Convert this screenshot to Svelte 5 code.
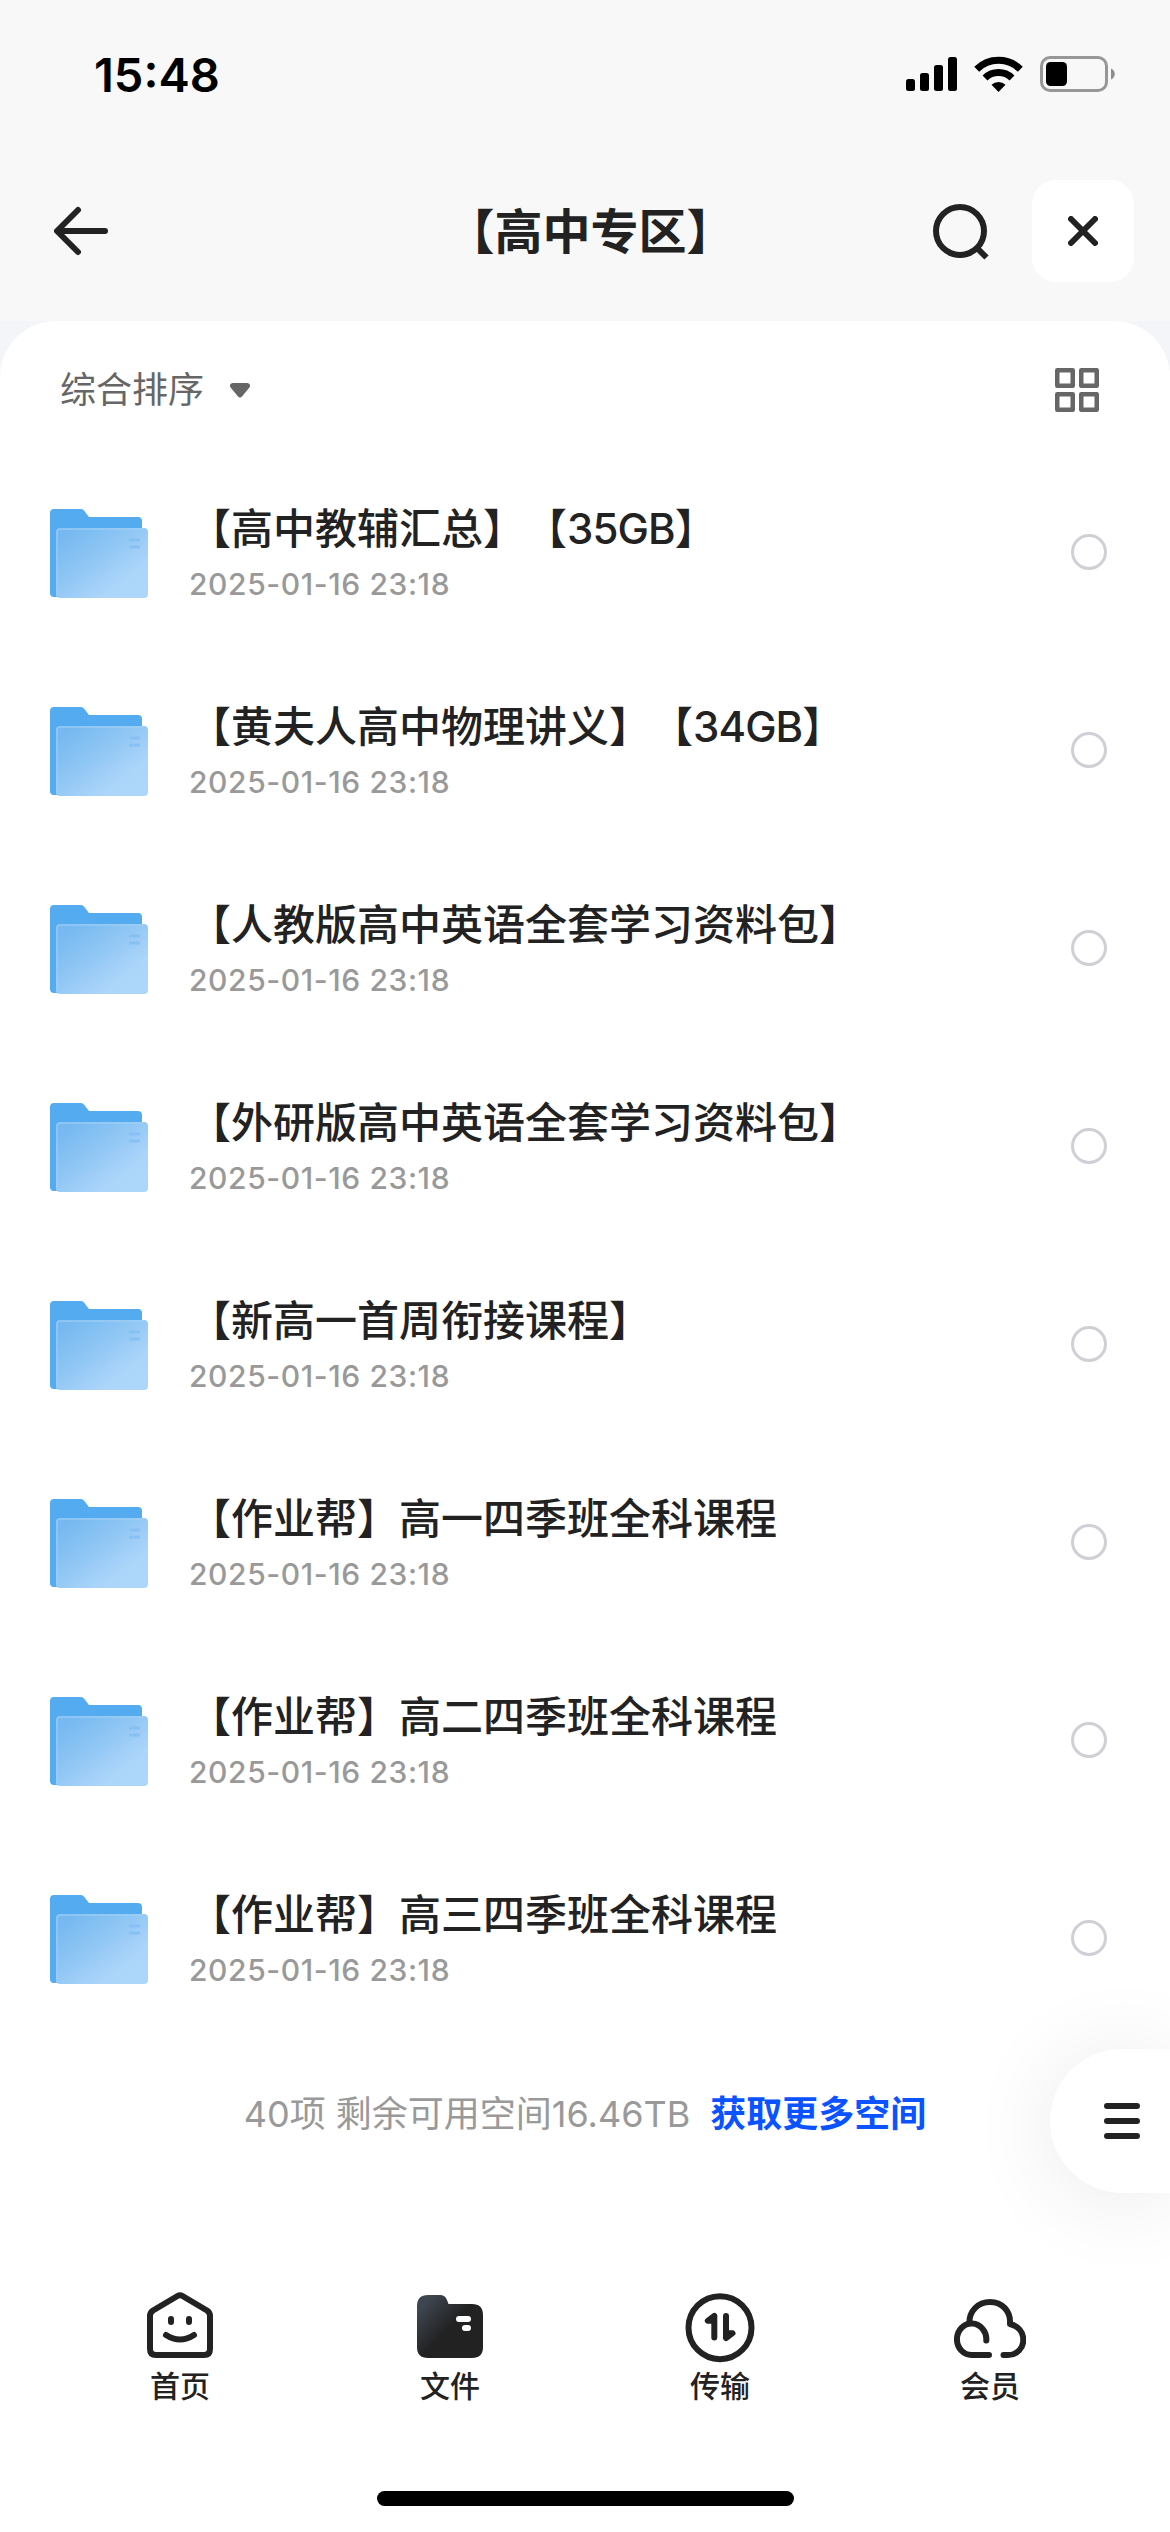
<script lang="ts">
  interface Folder {
    name: string;
    size?: string;
    date: string;
  }

  const folders: Folder[] = [
    { name: "【高中教辅汇总】", size: "35GB", date: "2025-01-16 23:18" },
    { name: "【黄夫人高中物理讲义】", size: "34GB", date: "2025-01-16 23:18" },
    { name: "【人教版高中英语全套学习资料包】", date: "2025-01-16 23:18" },
    { name: "【外研版高中英语全套学习资料包】", date: "2025-01-16 23:18" },
    { name: "【新高一首周衔接课程】", date: "2025-01-16 23:18" },
    { name: "【作业帮】高一四季班全科课程", date: "2025-01-16 23:18" },
    { name: "【作业帮】高二四季班全科课程", date: "2025-01-16 23:18" },
    { name: "【作业帮】高三四季班全科课程", date: "2025-01-16 23:18" },
  ];

  const tabs = [
    { id: "home", label: "首页" },
    { id: "files", label: "文件" },
    { id: "transfer", label: "传输" },
    { id: "member", label: "会员" },
  ];

  // Names of the checked folders
  let selected: string[] = $state([]);

  function toggle(name: string) {
    if (selected.includes(name)) {
      selected = selected.filter((item) => item !== name);
    } else {
      selected = [...selected, name];
    }
  }
</script>

<div class="screen">
  <div class="status">
    <span class="status__time">15:48</span>
    <div class="status__icons">
      <svg width="51" height="34" viewBox="0 0 51 34">
        <rect x="0" y="22" width="9" height="12" rx="2.5" />
        <rect x="14" y="16" width="9" height="18" rx="2.5" />
        <rect x="28" y="8" width="9" height="26" rx="2.5" />
        <rect x="42" y="0" width="9" height="34" rx="2.5" />
      </svg>
      <svg width="49" height="36" viewBox="0 0 49 36">
        <g fill="none" stroke="#000" stroke-width="7">
          <path d="M2.700 13.200a31 31 0 0 1 43.600 0" />
          <path d="M11 22a19.500 19.500 0 0 1 27 0" />
        </g>
        <path d="M24.500 36l-7-7.300a10.200 10.200 0 0 1 14 0z" />
      </svg>
      <svg width="76" height="36" viewBox="0 0 76 36">
        <rect x="1.500" y="1.500" width="65" height="33" rx="8.500" fill="none" stroke="#979797" stroke-width="3" />
        <rect x="6" y="6" width="21" height="24" rx="4.500" />
        <path d="M71 12.500c5 2 5 9 0 11z" fill="#8e8e8e" />
      </svg>
    </div>
  </div>

  <header class="header">
    <button class="header__back" aria-label="返回">
      <svg width="54" height="54" viewBox="0 0 54 54">
        <path d="M24 6L3 27l21 21M4 27h47" />
      </svg>
    </button>
    <h1 class="header__title">【高中专区】</h1>
    <div class="header__actions">
      <button aria-label="搜索">
        <svg width="58" height="58" viewBox="0 0 58 58">
          <circle cx="28" cy="29" r="24" />
          <path d="M44 45l10.500 10.500" stroke-linecap="butt" />
        </svg>
      </button>
      <button class="header__close" aria-label="关闭">
        <svg width="30" height="30" viewBox="0 0 30 30">
          <path d="M3 3l24 24M27 3L3 27" />
        </svg>
      </button>
    </div>
  </header>

  <main class="body">
    <section class="panel">
      <div class="toolbar">
        <button class="toolbar__sort">
          <span>综合排序</span>
          <svg width="20" height="15" viewBox="0 0 20 15">
            <path d="M3 0h14c3 0 4 3 2 5l-7 8.500c-1 1.200-3 1.200-4 0L1 5C-1 3 0 0 3 0z" />
          </svg>
        </button>
        <button class="toolbar__view" aria-label="视图">
          <svg width="44" height="44" viewBox="0 0 44 44">
            <rect x="2.250" y="2.250" width="15.500" height="15.500" />
            <rect x="26.250" y="2.250" width="15.500" height="15.500" />
            <rect x="2.250" y="26.250" width="15.500" height="15.500" />
            <rect x="26.250" y="26.250" width="15.500" height="15.500" />
          </svg>
        </button>
      </div>

      <ul class="list">
        {#each folders as folder}
          <li class="row">
            <svg class="row__icon" width="98" height="90" viewBox="0 0 98 90">
              <defs>
                <linearGradient id="front" x1="0.050" y1="0.150" x2="0.850" y2="0.950">
                  <stop offset="0" stop-color="#76b9f0" />
                  <stop offset="0.400" stop-color="#8fc6f4" />
                  <stop offset="0.800" stop-color="#acd5fa" />
                  <stop offset="1" stop-color="#add6fb" />
                </linearGradient>
              </defs>
              <path d="M4 1h27q2 0 3.200 1.700L39 9h49q4 0 4 4v20L8 89H4q-4 0-4-4V5q0-4 4-4z" fill="#55abef" />
              <rect x="6" y="20" width="92" height="70" rx="4" fill="url(#front)" />
              <path d="M7 88V24q0-3 3-3h84" fill="none" stroke="#a3d0f7" stroke-width="1.500" opacity="0.700" />
              <path d="M79 32h11M79 39h11" stroke="#87c0f3" stroke-width="3" />
            </svg>
            <div class="row__text">
              <span class="row__name">
                {folder.name}{#if folder.size}【<span class="row__size">{folder.size}</span>】{/if}
              </span>
              <span class="row__date">{folder.date}</span>
            </div>
            <button
              class="row__check"
              class:row__check--on={selected.includes(folder.name)}
              aria-label="选择"
              onclick={() => toggle(folder.name)}></button>
          </li>
        {/each}
      </ul>

      <p class="summary">
        <span>40项 剩余可用空间16.46TB</span>
        <a href="#more">获取更多空间</a>
      </p>
    </section>

    <button class="menu" aria-label="菜单">
      <svg width="36" height="36" viewBox="0 0 36 36">
        <path d="M3 3h30M3 18h30M3 33h30" />
      </svg>
    </button>
  </main>

  <nav class="tabs">
    {#each tabs as tab}
      <button class="tab">
        <svg width="72" height="72" viewBox="0 0 72 72">
          {#if tab.id === "home"}
            <path d="M33.500 4Q36 2.500 38.500 4L63 18.500Q66 20.500 66 24V57Q66 63 60 63H12Q6 63 6 57V24Q6 20.500 9 18.500Z" />
            <path d="M27 27v3M45 27v3M22 43q14 9 28 0" />
          {:else if tab.id === "files"}
            <defs>
              <linearGradient id="dark" x1="0.100" y1="0.150" x2="0.500" y2="0.500">
                <stop offset="0" stop-color="#3e4650" />
                <stop offset="1" stop-color="#222" />
              </linearGradient>
            </defs>
            <path
              d="M3 14Q3 3 14 3H26Q31 3 33 8L34.500 12H58Q69 12 69 23V55Q69 66 58 66H14Q3 66 3 55Z"
              fill="url(#dark)"
              stroke="none" />
            <path d="M45 27h9M51 36h3" stroke="#fff" />
          {:else if tab.id === "transfer"}
            <circle cx="36" cy="35.700" r="31.500" />
            <path d="M30.300 24v21.500M30.300 24l-6.500 4.800h6.500M42 24v21.500M42 46l6.500-4.800H42" />
          {:else}
            <path d="M15.300 31C15.300 19 24 10 36 10S57 19 56 32C64 34 69.300 40 69.300 48S63 63 54 63H49.500" />
            <path d="M35 63H18A14.700 15.700 0 1 1 32.300 48.500" />
          {/if}
        </svg>
        <span>{tab.label}</span>
      </button>
    {/each}
  </nav>
  <div class="indicator"></div>
</div>

<style>
  :global(body) {
    margin: 0;
    background: #fff;
  }

  button {
    display: flex;
    align-items: center;
    padding: 0;
    border: 0;
    background: none;
    font: inherit;
    color: inherit;
  }

  svg {
    display: block;
    flex: none;
  }

  .screen {
    display: flex;
    flex-direction: column;
    box-sizing: border-box;
    width: 1170px;
    height: 2532px;
    padding-bottom: 26px;
    overflow: hidden;
    background: #fff;
    color: #222;
    font-family: Inter, "Noto Sans CJK SC", sans-serif;
  }

  .status {
    display: flex;
    align-items: center;
    justify-content: space-between;
    box-sizing: border-box;
    height: 150px;
    padding: 0 54px 2px 94px;
    background: #f8f8f8;
    color: #000;
  }
  .status__time {
    font-size: 47px;
    font-weight: 600;
  }
  .status__icons {
    display: flex;
    align-items: center;
    gap: 17px;
  }

  .header {
    display: grid;
    grid-template-columns: 1fr auto 1fr;
    align-items: center;
    height: 102px;
    padding: 30px 36px 39px 54px;
    background: #f8f8f8;
  }
  .header svg {
    fill: none;
    stroke: #222;
    stroke-width: 6;
    stroke-linecap: round;
    stroke-linejoin: round;
  }
  .header__title {
    margin: 2px 0 0 -7px;
    font-size: 48px;
    font-weight: 700;
    line-height: 72px;
  }
  .header__actions {
    display: flex;
    align-items: center;
    justify-content: flex-end;
    gap: 42px;
  }
  .header__close {
    justify-content: center;
    width: 102px;
    height: 102px;
    border-radius: 24px;
    background: #fff;
  }

  .body {
    position: relative;
    height: 1950px;
    overflow: hidden;
    background: #f4f5f8;
  }
  .panel {
    height: 100%;
    border-radius: 56px 56px 0 0;
    background: #fff;
  }

  .toolbar {
    display: flex;
    align-items: center;
    justify-content: space-between;
    box-sizing: border-box;
    height: 132px;
    padding: 6px 71px 0 60px;
    color: #666;
  }
  .toolbar__sort {
    gap: 26px;
    font-size: 36px;
  }
  .toolbar__sort span {
    margin-bottom: 6px;
  }
  .toolbar__sort svg {
    fill: #666;
  }
  .toolbar__view svg {
    fill: none;
    stroke: #666;
    stroke-width: 4.5;
    stroke-linejoin: round;
  }

  .list {
    margin: 0;
    padding: 0;
    list-style: none;
  }
  .row {
    display: flex;
    align-items: center;
    height: 198px;
    padding: 0 63px 0 50px;
  }
  .row__icon {
    margin-top: 2px;
  }
  .row__text {
    display: flex;
    flex: 1;
    flex-direction: column;
    padding: 5px 0 0 41px;
  }
  .row__name {
    font-size: 42px;
    font-weight: 500;
    line-height: 60px;
    white-space: nowrap;
    text-spacing-trim: space-all;
  }
  .row__size {
    letter-spacing: -0.9px;
  }
  .row__date {
    color: #999;
    font-size: 30px;
    font-weight: 500;
    line-height: 51px;
    letter-spacing: 0.6px;
  }
  .row__check {
    box-sizing: border-box;
    width: 36px;
    height: 36px;
    border: 3px solid #cfcfd6;
    border-radius: 50%;
  }
  .row__check--on {
    background: #0b53ff;
  }

  .summary {
    display: flex;
    justify-content: center;
    gap: 20px;
    margin: 0;
    padding-top: 50px;
    color: #999;
    font-size: 36px;
    line-height: 54px;
    white-space: nowrap;
  }
  .summary a {
    color: #0b53ff;
    font-weight: 700;
    text-decoration: none;
  }

  /* Floating button docked to the right edge */
  .menu {
    position: absolute;
    top: 1728px;
    right: 0;
    box-sizing: border-box;
    width: 120px;
    height: 144px;
    padding-left: 54px;
    border-radius: 72px 0 0 72px;
    background: #fff;
    box-shadow: 0 6px 90px rgba(0, 0, 0, 0.09);
  }
  .menu svg {
    fill: none;
    stroke: #222;
    stroke-width: 6;
    stroke-linecap: round;
  }

  .tabs {
    display: flex;
    padding: 21px 45px 0;
  }
  .tab {
    flex: 1;
    flex-direction: column;
    font-size: 30px;
    font-weight: 500;
    line-height: 44px;
  }
  .tab svg {
    fill: none;
    stroke: #222;
    stroke-width: 6;
    stroke-linecap: round;
    stroke-linejoin: round;
  }

  .indicator {
    align-self: center;
    width: 417px;
    height: 15px;
    margin-top: auto;
    border-radius: 8px;
    background: #000;
  }
</style>
